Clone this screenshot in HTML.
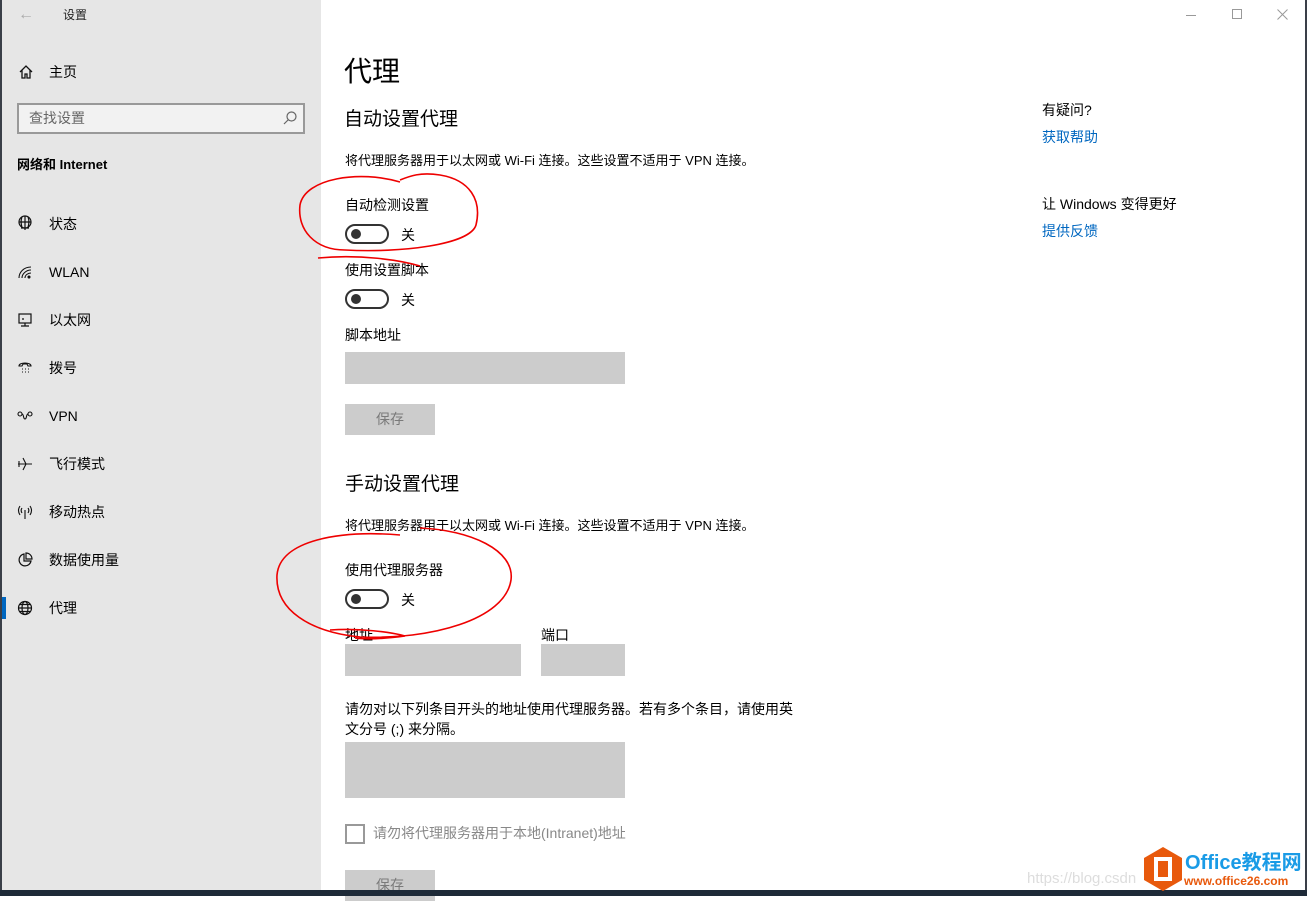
<!DOCTYPE html>
<html><head><meta charset="utf-8"><style>
*{margin:0;padding:0;box-sizing:border-box}
body{width:1307px;height:896px;overflow:hidden;position:relative;background:#fff;font-family:"Liberation Sans","Noto Sans CJK SC",sans-serif;color:#000}
.abs{position:absolute}
.side{left:0;top:0;width:321px;height:896px;background:#e6e6e6;border-left:2px solid #3a3f48}
.t{position:absolute;font-size:14px;white-space:nowrap;line-height:1}
.nav{font-size:14px}
.ic{position:absolute;width:16px;height:16px}
.tog{position:absolute;width:44px;height:20px;border:2px solid #333;border-radius:10px}
.tog::after{content:"";position:absolute;left:4px;top:3px;width:10px;height:10px;border-radius:50%;background:#333}
.box{position:absolute;background:#cccccc}
.btn{position:absolute;background:#cccccc;color:#7a7a7a;font-size:14px;text-align:center;line-height:31px}
a{color:#0067c0;text-decoration:none}
</style></head><body>
<div class="abs side"></div>
<div class="abs" style="right:0;top:0;width:2px;height:896px;background:#3a3f48"></div>
<!-- title -->
<div class="t" style="left:18px;top:7px;color:#aaa;font-size:16px">←</div>
<div class="t" style="left:63px;top:9px;font-size:12px;color:#222">设置</div>
<div class="abs" style="left:1186px;top:15px;width:10px;height:1px;background:#999"></div>
<div class="abs" style="left:1232px;top:9px;width:10px;height:10px;border:1px solid #999"></div>
<svg class="abs" style="left:1277px;top:9px" width="11" height="11" viewBox="0 0 11 11" stroke="#999" stroke-width="1"><path d="M0.5 0.5L10.5 10.5M10.5 0.5L0.5 10.5"/></svg>

<svg class="ic" style="left:18px;top:64px" viewBox="0 0 16 16" fill="none" stroke="#111" stroke-width="1.3"><path d="M2 8L8 2L14 8M4 6V14H7V10H9V14H12V6"/></svg>
<div class="t nav" style="left:49px;top:65px">主页</div>
<div class="abs" style="left:17px;top:103px;width:288px;height:31px;border:2px solid #999;background:#f2f2f2"></div>
<div class="t" style="left:29px;top:111px;color:#666">查找设置</div>
<svg class="ic" style="left:282px;top:110px" viewBox="0 0 16 16" fill="none" stroke="#666" stroke-width="1.2"><circle cx="9.5" cy="6.5" r="4.5"/><path d="M6.5 9.5L2 14"/></svg>
<div class="t" style="left:17px;top:158px;font-weight:bold;font-size:13px">网络和 Internet</div>

<svg class="ic" style="left:17px;top:215px" viewBox="0 0 16 16" fill="none" stroke="#111" stroke-width="1.2"><circle cx="8" cy="7" r="6"/><path d="M2 7H14M8 1V13M5 2C3 7 5 12 5 12M11 2C13 7 11 12 11 12M4 13H12M8 13V15"/></svg>
<div class="t nav" style="left:49px;top:217px">状态</div>
<svg class="ic" style="left:17px;top:264px" viewBox="0 0 16 16" fill="none" stroke="#111" stroke-width="1.1"><path d="M2 14C2 8 7 3 14 3M5 14C5 10 9 6 14 6M8 14C8 11 11 9 14 9"/><circle cx="12" cy="13" r="1" fill="#111"/></svg>
<div class="t nav" style="left:49px;top:265px">WLAN</div>
<svg class="ic" style="left:17px;top:312px" viewBox="0 0 16 16" fill="none" stroke="#111" stroke-width="1.2"><rect x="2" y="2" width="12" height="9"/><path d="M8 11V14M4 14H12M5 7H7"/></svg>
<div class="t nav" style="left:49px;top:313px">以太网</div>
<svg class="ic" style="left:17px;top:360px" viewBox="0 0 16 16" fill="none" stroke="#111" stroke-width="1.1"><path d="M2 6C2 2 14 2 14 6L11 6L10 4H6L5 6Z"/><path d="M5 9h1M8 9h1M11 9h1M5 12h1M8 12h1M11 12h1"/></svg>
<div class="t nav" style="left:49px;top:361px">拨号</div>
<svg class="ic" style="left:17px;top:408px" viewBox="0 0 16 16" fill="none" stroke="#111" stroke-width="1.1"><circle cx="3" cy="6" r="2"/><circle cx="13" cy="6" r="2"/><path d="M5 6C7 6 6 11 8 11C10 11 9 6 11 6"/></svg>
<div class="t nav" style="left:49px;top:409px">VPN</div>
<svg class="ic" style="left:17px;top:456px" viewBox="0 0 16 16" fill="none" stroke="#111" stroke-width="1.1"><path d="M1 8H15M6 2L9 8L6 14M2 5V11"/></svg>
<div class="t nav" style="left:49px;top:457px">飞行模式</div>
<svg class="ic" style="left:17px;top:504px" viewBox="0 0 16 16" fill="none" stroke="#111" stroke-width="1.1"><path d="M8 6V15M3 2C1 5 1 8 3 11M13 2C15 5 15 8 13 11M5 4C4 5.5 4 7.5 5 9M11 4C12 5.5 12 7.5 11 9"/></svg>
<div class="t nav" style="left:49px;top:505px">移动热点</div>
<svg class="ic" style="left:17px;top:552px" viewBox="0 0 16 16" fill="none" stroke="#111" stroke-width="1.2"><path d="M7 2A6 6 0 1 0 14 9H7Z"/><path d="M9 1V7H15A6 6 0 0 0 9 1Z"/></svg>
<div class="t nav" style="left:49px;top:553px">数据使用量</div>
<div class="abs" style="left:2px;top:597px;width:4px;height:22px;background:#0067c0"></div>
<svg class="ic" style="left:17px;top:600px" viewBox="0 0 16 16" fill="none" stroke="#111" stroke-width="1.2"><circle cx="8" cy="8" r="6.5"/><ellipse cx="8" cy="8" rx="3" ry="6.5"/><path d="M1.5 8H14.5M3 4.5H13M3 11.5H13"/></svg>
<div class="t nav" style="left:49px;top:601px">代理</div>

<!-- main -->
<div class="t" style="left:344px;top:58px;font-size:28px">代理</div>
<div class="t" style="left:344px;top:110px;font-size:19px">自动设置代理</div>
<div class="t" style="left:345px;top:154px;font-size:13px">将代理服务器用于以太网或 Wi-Fi 连接。这些设置不适用于 VPN 连接。</div>
<div class="t" style="left:345px;top:198px">自动检测设置</div>
<div class="tog" style="left:345px;top:224px"></div><div class="t" style="left:401px;top:228px">关</div>
<div class="t" style="left:345px;top:263px">使用设置脚本</div>
<div class="tog" style="left:345px;top:289px"></div><div class="t" style="left:401px;top:293px">关</div>
<div class="t" style="left:345px;top:328px">脚本地址</div>
<div class="box" style="left:345px;top:352px;width:280px;height:32px"></div>
<div class="btn" style="left:345px;top:404px;width:90px;height:31px">保存</div>

<div class="t" style="left:345px;top:475px;font-size:19px">手动设置代理</div>
<div class="t" style="left:345px;top:519px;font-size:13px">将代理服务器用于以太网或 Wi-Fi 连接。这些设置不适用于 VPN 连接。</div>
<div class="t" style="left:345px;top:563px">使用代理服务器</div>
<div class="tog" style="left:345px;top:589px"></div><div class="t" style="left:401px;top:593px">关</div>
<div class="t" style="left:345px;top:628px">地址</div>
<div class="t" style="left:541px;top:628px">端口</div>
<div class="box" style="left:345px;top:644px;width:176px;height:32px"></div>
<div class="box" style="left:541px;top:644px;width:84px;height:32px"></div>
<div class="t" style="left:345px;top:699px;line-height:20px;white-space:normal;width:460px">请勿对以下列条目开头的地址使用代理服务器。若有多个条目，请使用英<br>文分号 (;) 来分隔。</div>
<div class="box" style="left:345px;top:742px;width:280px;height:56px"></div>
<div class="abs" style="left:345px;top:824px;width:20px;height:20px;border:2px solid #999"></div>
<div class="t" style="left:373px;top:826px;color:#888">请勿将代理服务器用于本地(Intranet)地址</div>
<div class="btn" style="left:345px;top:870px;width:90px;height:31px">保存</div>

<div class="t" style="left:1042px;top:103px">有疑问?</div>
<div class="t" style="left:1042px;top:130px"><a>获取帮助</a></div>
<div class="t" style="left:1042px;top:197px">让 Windows 变得更好</div>
<div class="t" style="left:1042px;top:224px"><a>提供反馈</a></div>

<!-- taskbar -->
<div class="abs" style="left:0;top:890px;width:1307px;height:6px;background:#1e2a38"></div>

<!-- watermark -->
<div class="t" style="left:1027px;top:871px;font-size:15px;color:#ddd">https://blog.csdn</div>
<svg class="abs" style="left:1143px;top:847px" width="40" height="44" viewBox="0 0 40 44"><polygon points="20,0 39,11 39,33 20,44 1,33 1,11" fill="#e8590c"/><rect x="13" y="12" width="14" height="20" fill="none" stroke="#fff" stroke-width="4"/></svg>
<div class="t" style="left:1185px;top:853px;font-size:20px;font-weight:bold;color:#1a9be6">Office教程网</div>
<div class="t" style="left:1184px;top:875px;font-size:12px;font-weight:bold;color:#e8590c">www.office26.com</div>

<!-- red annotations -->
<svg class="abs" style="left:0;top:0" width="1307" height="896" fill="none" stroke="#e00" stroke-width="1.6">
<path d="M400 182C360 170 305 178 300 205C297 230 315 250 345 250C400 253 470 245 476 225C482 200 470 180 440 175C420 172 410 176 400 180"/>
<path d="M318 258C360 254 400 260 420 266"/>
<path d="M400 535C340 530 280 540 277 575C275 610 310 632 360 637C430 640 505 620 511 580C515 550 470 530 420 528"/>
<path d="M330 630C360 628 390 632 405 636C390 638 370 640 355 638"/>
</svg>
</body></html>
